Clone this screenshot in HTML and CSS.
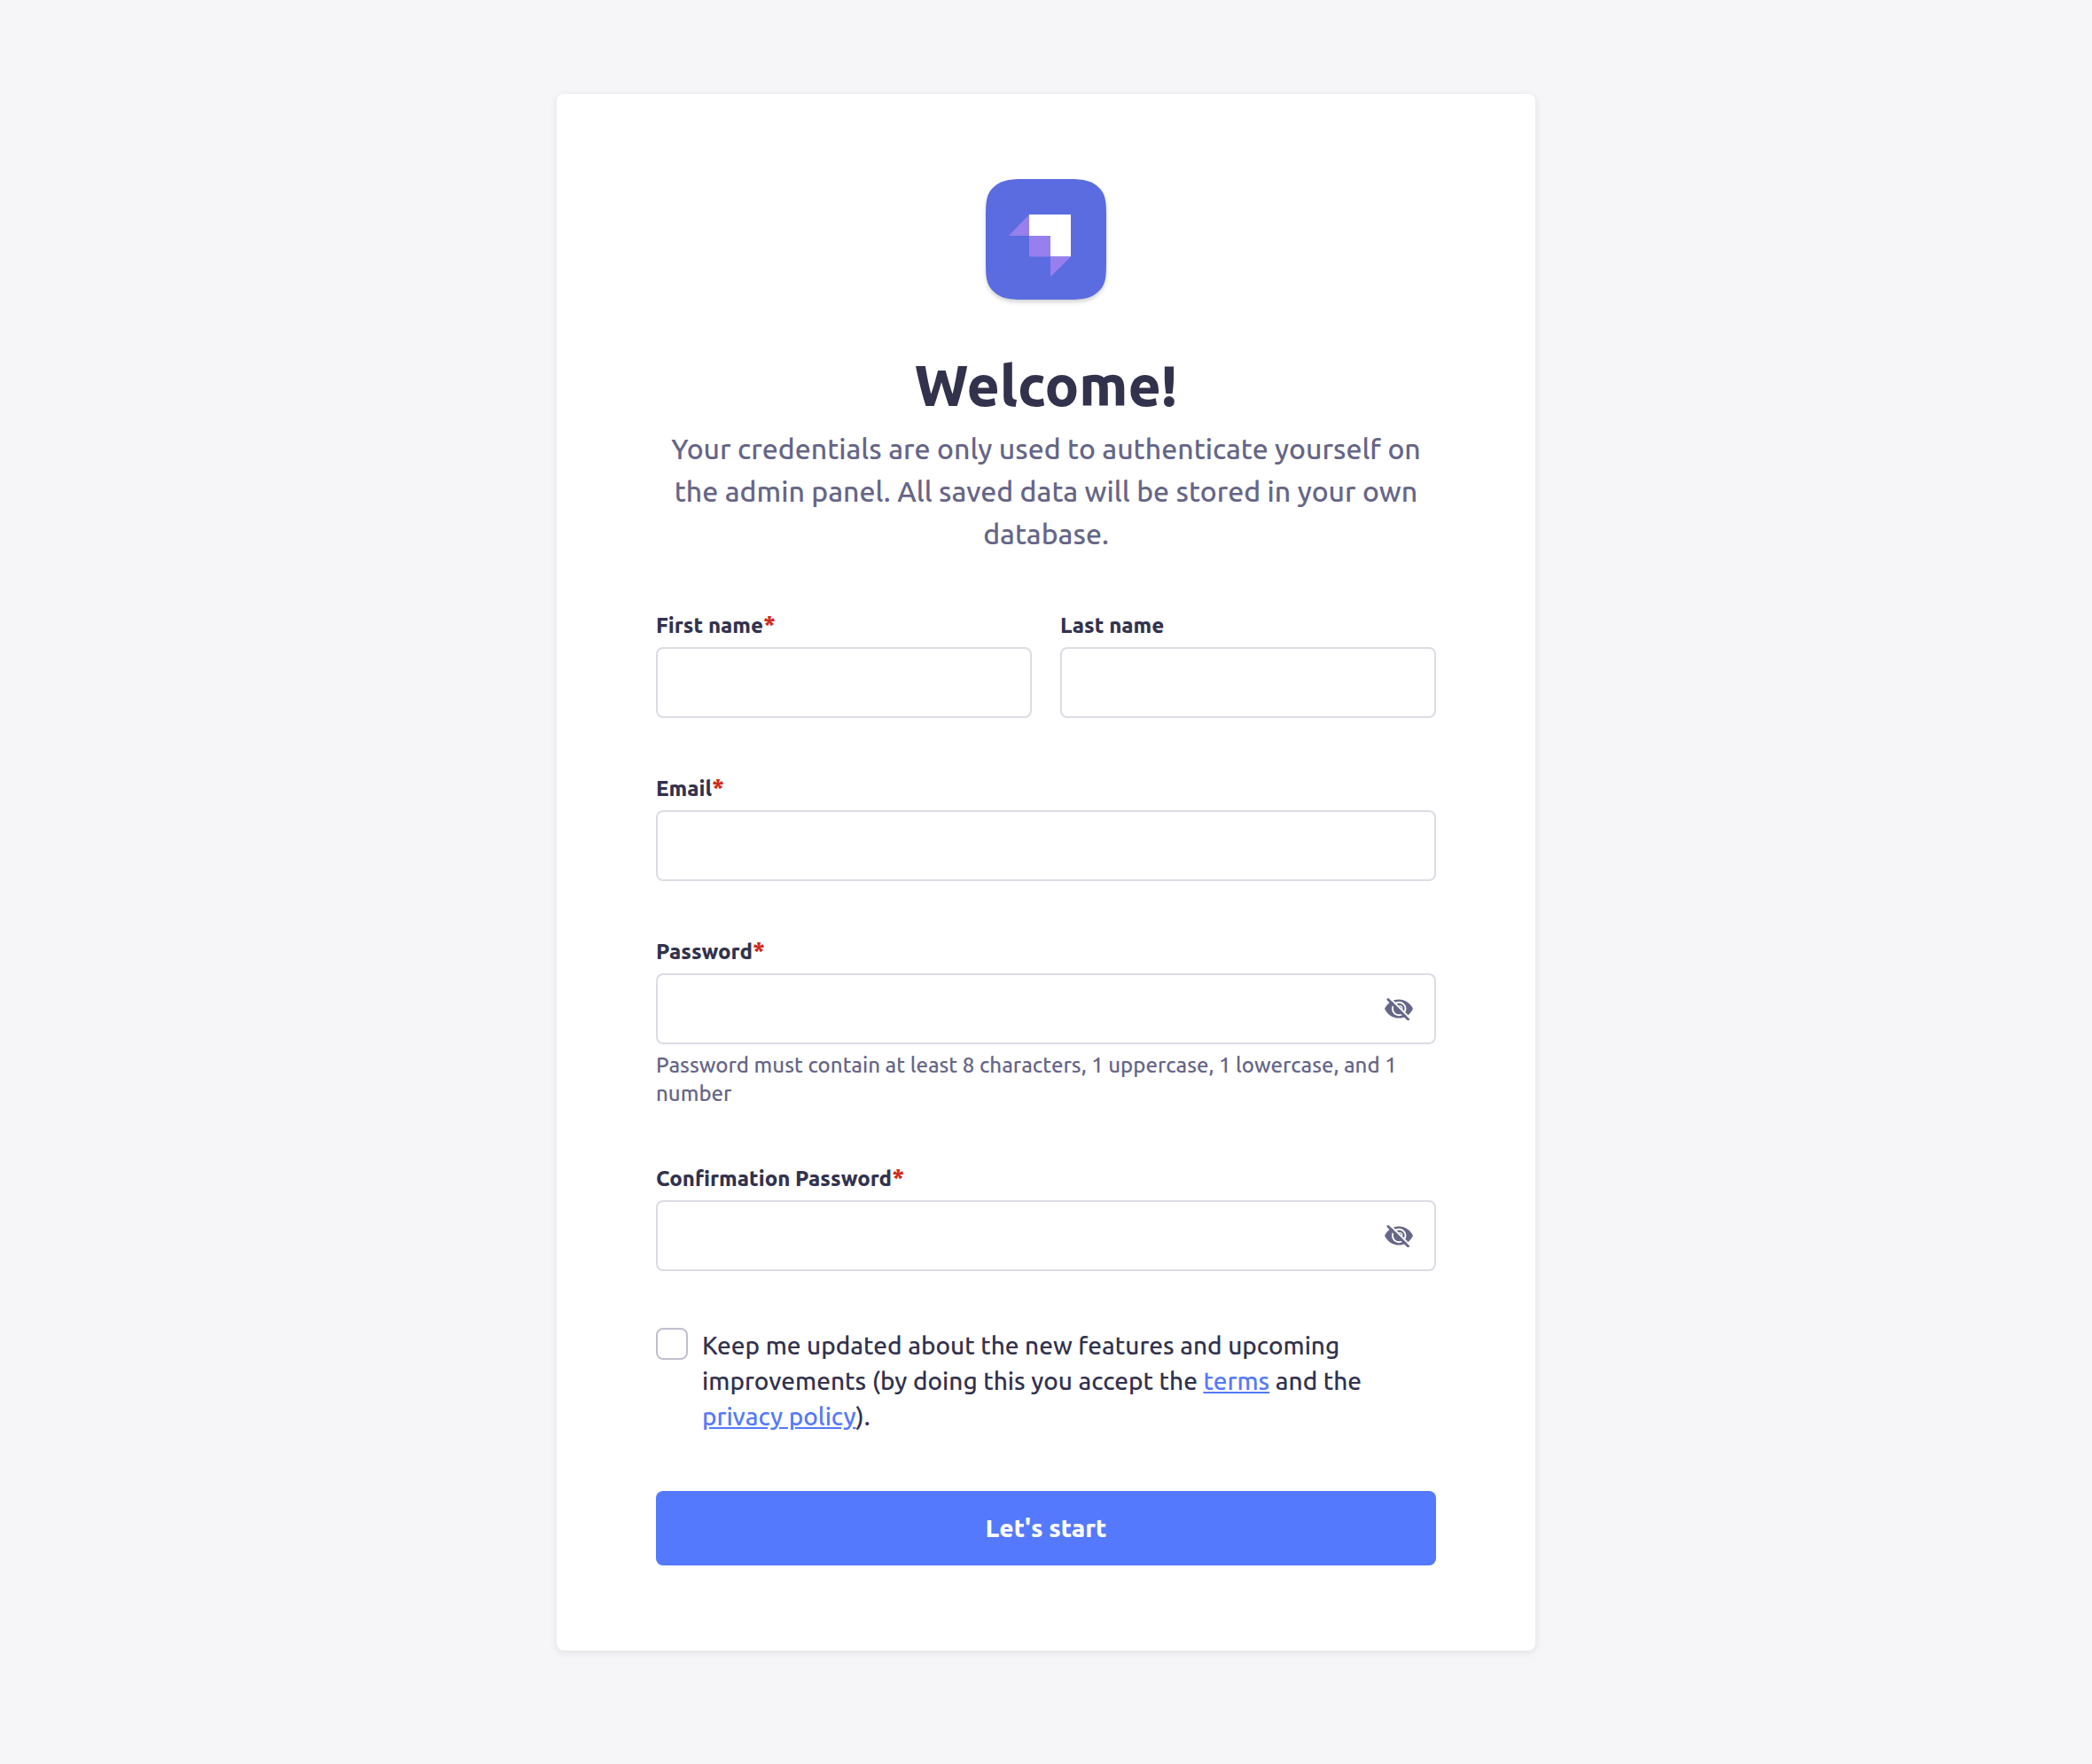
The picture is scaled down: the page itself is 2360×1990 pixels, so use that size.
FILE: index.html
```html
<!DOCTYPE html>
<html lang="en">
<head>
  <meta charset="utf-8">
  <meta name="viewport" content="width=device-width, initial-scale=1">
  <title>Welcome!</title>
  <link rel="stylesheet" href="styles.css">
</head>
<body>
  <svg class="sprite" aria-hidden="true">
    <symbol id="eye-off" viewBox="0 0 32 26">
      <path fill="currentColor" d="M16 2.400C8.800 2.400 3 6.800 0 13 3 19.400 8.800 23.600 16 23.600S29 19.400 32 13C29 6.800 23.200 2.400 16 2.400Z"/>
      <circle cx="16.200" cy="13" r="7.300" fill="none" stroke="#fff" stroke-width="1.900"/>
      <path d="M16.300 9.600a3.700 3.700 0 0 1 3.600 3.600" fill="none" stroke="#fff" stroke-width="1.300"/>
      <path d="M5.400 0.400 29.500 24.500" stroke="#fff" stroke-width="1.900"/>
      <path d="M3.900 2.400 26.600 25" stroke="currentColor" stroke-width="2.800" stroke-linecap="round"/>
    </symbol>
  </svg>
  <main class="page">
    <form class="card">
      <header class="intro">
        <svg class="logo" viewBox="0 0 136 136" role="img" aria-label="Logo">
          <path fill="#5a6cdf" d="M0 47C0 28 0 19 7 11 15 2 25 0 42 0H94C111 0 121 2 129 11 136 19 136 28 136 47V89C136 108 136 117 129 125 121 134 111 136 94 136H42C25 136 15 134 7 125 0 117 0 108 0 89Z"/>
          <path fill="#fff" d="M49 40H96V87.500H73V64H49Z"/>
          <path fill="#987fee" d="M49 64H73V87.500H49ZM49 40V64H26ZM73 87.500H96L73 110.500Z"/>
        </svg>
        <h1 class="title">Welcome!</h1>
        <p class="subtitle">Your credentials are only used to authenticate yourself on the admin panel. All saved data will be stored in your own database.</p>
      </header>
      <div class="row">
        <div class="field">
          <label class="label" for="firstname">First name<span class="required">*</span></label>
          <input class="input" id="firstname" type="text" required>
        </div>
        <div class="field">
          <label class="label" for="lastname">Last name</label>
          <input class="input" id="lastname" type="text">
        </div>
      </div>
      <div class="field">
        <label class="label" for="email">Email<span class="required">*</span></label>
        <input class="input" id="email" type="email" required>
      </div>
      <div class="field">
        <label class="label" for="password">Password<span class="required">*</span></label>
        <div class="secret">
          <input class="secret-input" id="password" type="password" aria-describedby="password-hint" required>
          <button class="reveal" type="button" aria-label="Show password"><svg class="eye"><use href="#eye-off"/></svg></button>
        </div>
        <p class="hint" id="password-hint">Password must contain at least 8 characters, 1 uppercase, 1 lowercase, and 1 number</p>
      </div>
      <div class="field">
        <label class="label" for="confirm">Confirmation Password<span class="required">*</span></label>
        <div class="secret">
          <input class="secret-input" id="confirm" type="password" required>
          <button class="reveal" type="button" aria-label="Show password"><svg class="eye"><use href="#eye-off"/></svg></button>
        </div>
      </div>
      <div class="consent">
        <input class="checkbox" id="news" type="checkbox">
        <label class="consent-text" for="news">Keep me updated about the new features and upcoming improvements (by doing this you accept the <a class="link" href="#terms">terms</a> and the <a class="link" href="#privacy">privacy policy</a>).</label>
      </div>
      <button class="submit" type="submit">Let's start</button>
    </form>
  </main>
</body>
</html>
```
FILE: styles.css
```css
*,
*::before,
*::after {
  box-sizing: border-box;
}

body {
  margin: 0;
  background: #f6f6f9;
  color: #32324d;
  font-family: Ubuntu, "Ubuntu Sans", "Noto Sans", sans-serif;
  font-weight: 500;
}

.sprite {
  display: none;
}

.page {
  display: flex;
  justify-content: center;
  min-height: 100vh;
  align-items: flex-start;
  padding: 106px 32px 128px;
}

.card {
  display: flex;
  flex-direction: column;
  gap: 64px;
  width: 100%;
  max-width: 1104px;
  padding: 96px 112px;
  border-radius: 8px;
  background: #fff;
  box-shadow: 0 2px 8px rgba(33, 33, 52, 0.1);
}

.intro {
  display: flex;
  flex-direction: column;
  align-items: center;
  text-align: center;
}

.logo {
  width: 136px;
  height: 136px;
  filter: drop-shadow(0 3px 2px rgba(33, 33, 52, 0.2));
}

.title {
  margin: 56px 0 8px;
  font-size: 64px;
  line-height: 80px;
  font-weight: 800;
}

.subtitle {
  margin: 0;
  color: #666687;
  font-size: 32px;
  line-height: 48px;
}

.row {
  display: grid;
  grid-template-columns: 1fr 1fr;
  gap: 32px;
}

.field {
  display: flex;
  flex-direction: column;
  gap: 8px;
}

.label {
  font-size: 24px;
  line-height: 32px;
  font-weight: 800;
}

.required {
  color: #d02b20;
  font-size: 28px;
  line-height: 24px;
}

.input,
.secret {
  width: 100%;
  height: 80px;
  border: 2px solid #dcdce4;
  border-radius: 8px;
  background: #fff;
}

.input {
  padding: 0 32px;
  color: inherit;
  font: inherit;
  font-size: 28px;
}

.secret {
  display: flex;
  align-items: center;
}

.secret-input {
  flex: 1;
  min-width: 0;
  height: 100%;
  padding: 0 32px;
  border: 0;
  border-radius: 8px;
  background: none;
  font-size: 28px;
}

.reveal {
  display: flex;
  padding: 0 24px;
  border: 0;
  background: none;
  color: #666687;
  cursor: pointer;
}

.eye {
  width: 32px;
  height: 26px;
}

.hint {
  margin: 0;
  color: #666687;
  font-size: 24px;
  line-height: 32px;
}

.consent {
  display: flex;
  align-items: flex-start;
  gap: 16px;
}

.checkbox {
  flex: none;
  width: 36px;
  height: 36px;
  margin: 0;
  border: 2px solid #c0c0cf;
  border-radius: 8px;
  background: #fff;
  appearance: none;
}

.checkbox:checked {
  border-color: #5479fc;
  background: #5479fc;
}

.consent-text {
  font-size: 28px;
  line-height: 40px;
}

.link {
  color: #5479fc;
  white-space: nowrap;
}

.submit {
  height: 84px;
  padding: 0 32px 2px;
  border: 0;
  border-radius: 8px;
  background: #5479fc;
  color: #fff;
  font: inherit;
  font-size: 28px;
  font-weight: 800;
  cursor: pointer;
}
```
